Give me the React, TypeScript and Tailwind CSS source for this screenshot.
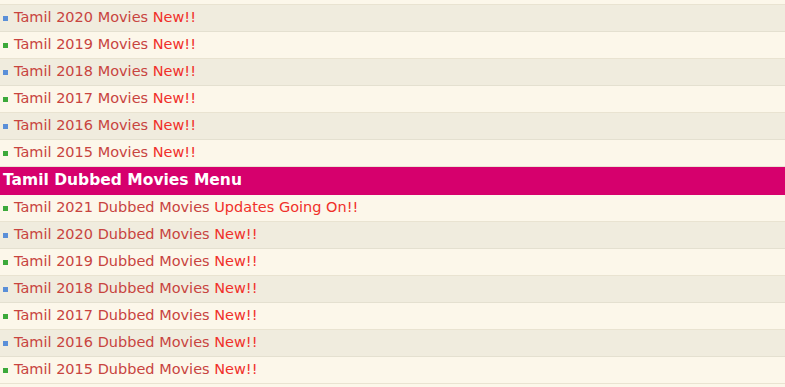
import React from "react";

type Row = { label: string; suffix: string };

const movies: Row[] = [
  { label: "Tamil 2020 Movies", suffix: "New!!" },
  { label: "Tamil 2019 Movies", suffix: "New!!" },
  { label: "Tamil 2018 Movies", suffix: "New!!" },
  { label: "Tamil 2017 Movies", suffix: "New!!" },
  { label: "Tamil 2016 Movies", suffix: "New!!" },
  { label: "Tamil 2015 Movies", suffix: "New!!" },
];

const dubbed: Row[] = [
  { label: "Tamil 2021 Dubbed Movies", suffix: "Updates Going On!!" },
  { label: "Tamil 2020 Dubbed Movies", suffix: "New!!" },
  { label: "Tamil 2019 Dubbed Movies", suffix: "New!!" },
  { label: "Tamil 2018 Dubbed Movies", suffix: "New!!" },
  { label: "Tamil 2017 Dubbed Movies", suffix: "New!!" },
  { label: "Tamil 2016 Dubbed Movies", suffix: "New!!" },
  { label: "Tamil 2015 Dubbed Movies", suffix: "New!!" },
];

function MenuRow({ row, even }: { row: Row; even: boolean }) {
  return (
    <div
      className={
        even
          ? "flex h-[27px] items-center border-b border-[#e9e3d1] bg-[#fcf7ea] pl-[3px]"
          : "flex h-[27px] items-center border-b border-[#e4e0d0] bg-[#f0ecde] pl-[3px]"
      }
    >
      <span
        className={
          even
            ? "mr-[6px] h-[5px] w-[5px] shrink-0 bg-[#3ca93a]"
            : "mr-[6px] h-[5px] w-[5px] shrink-0 bg-[#5a8fd8]"
        }
      />
      <a href="#" className="text-[14.5px] text-[#c8443f]">
        {row.label} <span className="text-[#f0302a]">{row.suffix}</span>
      </a>
    </div>
  );
}

export default function App() {
  return (
    <div className="h-[387px] w-[785px] overflow-hidden bg-[#fcf7ea] font-['DejaVu_Sans',Verdana,sans-serif]">
      {/* tail of the row above, scrolled off */}
      <div className="h-[5px] border-b border-[#e9e3d1] bg-[#fcf7ea]" />
      {movies.map((r, i) => (
        <MenuRow key={r.label} row={r} even={i % 2 === 1} />
      ))}
      <div className="flex h-[28px] items-center bg-[#d6006d] pl-[3px] text-[15.5px] font-bold text-white">
        Tamil Dubbed Movies Menu
      </div>
      {dubbed.map((r, i) => (
        <MenuRow key={r.label} row={r} even={i % 2 === 0} />
      ))}
    </div>
  );
}
